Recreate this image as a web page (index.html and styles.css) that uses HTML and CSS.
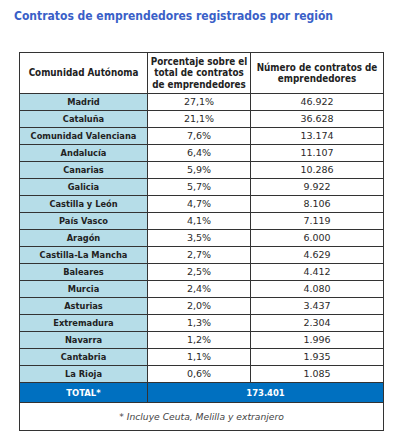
FILE: index.html
```html
<!DOCTYPE html>
<html lang="es">
<head>
    <meta charset="UTF-8">
    <title>Contratos de emprendedores registrados por región</title>
    <link rel="stylesheet" href="styles.css">
</head>
<body>
    <h1 class="title">Contratos de emprendedores registrados por región</h1>
    <table class="data-table">
        <thead>
            <tr>
                <th class="col-region">Comunidad Autónoma</th>
                <th class="col-pct">Porcentaje sobre el<br>total de contratos<br>de emprendedores</th>
                <th class="col-num">Número de contratos de<br>emprendedores</th>
            </tr>
        </thead>
        <tbody>
            <tr><td class="region">Madrid</td><td>27,1%</td><td>46.922</td></tr>
            <tr><td class="region">Cataluña</td><td>21,1%</td><td>36.628</td></tr>
            <tr><td class="region">Comunidad Valenciana</td><td>7,6%</td><td>13.174</td></tr>
            <tr><td class="region">Andalucía</td><td>6,4%</td><td>11.107</td></tr>
            <tr><td class="region">Canarias</td><td>5,9%</td><td>10.286</td></tr>
            <tr><td class="region">Galicia</td><td>5,7%</td><td>9.922</td></tr>
            <tr><td class="region">Castilla y León</td><td>4,7%</td><td>8.106</td></tr>
            <tr><td class="region">País Vasco</td><td>4,1%</td><td>7.119</td></tr>
            <tr><td class="region">Aragón</td><td>3,5%</td><td>6.000</td></tr>
            <tr><td class="region">Castilla-La Mancha</td><td>2,7%</td><td>4.629</td></tr>
            <tr><td class="region">Baleares</td><td>2,5%</td><td>4.412</td></tr>
            <tr><td class="region">Murcia</td><td>2,4%</td><td>4.080</td></tr>
            <tr><td class="region">Asturias</td><td>2,0%</td><td>3.437</td></tr>
            <tr><td class="region">Extremadura</td><td>1,3%</td><td>2.304</td></tr>
            <tr><td class="region">Navarra</td><td>1,2%</td><td>1.996</td></tr>
            <tr><td class="region">Cantabria</td><td>1,1%</td><td>1.935</td></tr>
            <tr><td class="region">La Rioja</td><td>0,6%</td><td>1.085</td></tr>
            <tr class="total-row"><td>TOTAL*</td><td colspan="2">173.401</td></tr>
            <tr class="note-row"><td colspan="3">* Incluye Ceuta, Melilla y extranjero</td></tr>
        </tbody>
    </table>
</body>
</html>
```

FILE: styles.css
```css
body {
    margin: 0;
    background-color: #fff;
    font-family: "DejaVu Sans Condensed", "DejaVu Sans", Verdana, sans-serif;
    color: #222;
}
.title {
    margin: 0;
    padding: 8px 0 0 14px;
    font-size: 12px;
    line-height: 16px;
    font-weight: bold;
    color: #3a5fc8;
}
.data-table {
    margin: 28px 0 0 19px;
    width: 365px;
    border-collapse: collapse;
    table-layout: fixed;
    font-size: 9.2px;
}
.data-table th,
.data-table td {
    border: 1px solid #333;
    text-align: center;
    padding: 0;
}
.data-table th {
    height: 40px;
    font-size: 9.8px;
    font-weight: bold;
    line-height: 11.5px;
    color: #222;
}
.col-region {
    width: 127px;
}
.col-pct {
    width: 102px;
}
.data-table td {
    height: 16px;
    line-height: 12px;
    font-family: "DejaVu Sans", Verdana, sans-serif;
    font-size: 9.5px;
    color: #2a2a2a;
}
.data-table td.region {
    background-color: #b6dde8;
    font-family: "DejaVu Sans Condensed", "DejaVu Sans", Verdana, sans-serif;
    font-size: 9.2px;
    font-weight: bold;
    color: #222;
}
.total-row td {
    height: 19px;
    background-color: #0070c0;
    font-weight: bold;
}
.data-table .total-row td {
    font-family: "DejaVu Sans Condensed", "DejaVu Sans", Verdana, sans-serif;
    font-size: 9.4px;
    color: #fff;
}
.data-table .note-row td {
    height: 27px;
    font-size: 9.2px;
    font-style: italic;
    color: #444;
}
```
